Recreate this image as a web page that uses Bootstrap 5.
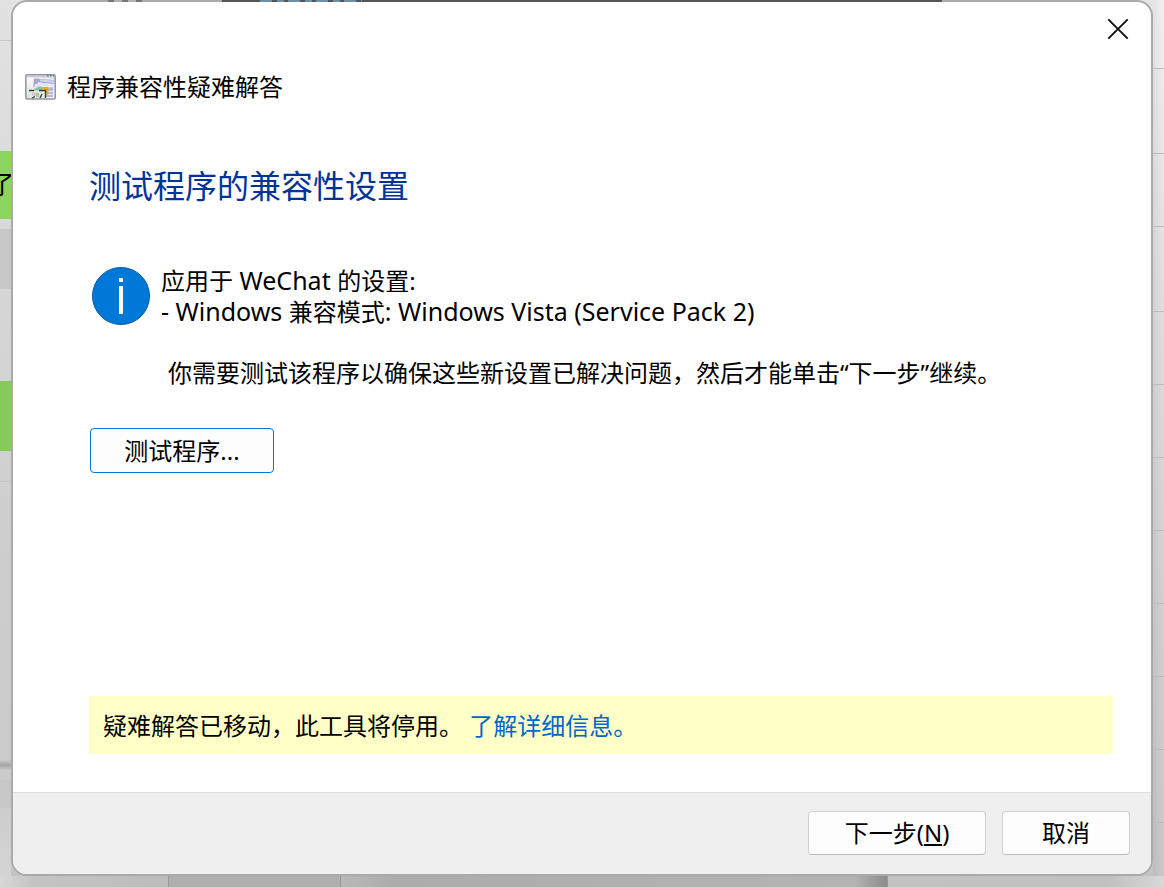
<!DOCTYPE html>
<html lang="zh-CN">
<head>
<meta charset="utf-8">
<meta name="viewport" content="width=device-width, initial-scale=1">
<title>程序兼容性疑难解答</title>
<link href="https://cdn.jsdelivr.net/npm/bootstrap@5.3.0/dist/css/bootstrap.min.css" rel="stylesheet">
<style>
  body {
    font-family: "Noto Sans", "Noto Sans CJK SC", sans-serif;
    font-size: 24px;
    line-height: 32px;
    color: #000;
    background: #c6c6c6;
  }
  .desktop { background: linear-gradient(#e4e4e4, #d4d4d4 45%, #cecece 96%, #bcbcbc); }
  .edge { width: 11px; flex: none; }
  .edge-left { background: linear-gradient(#e2e2e2, #d6d6d6 35%, #cdcdcd 65%, #cbcbcb 90%, #d4d4d4); }
  .edge-left div { flex: none; }
  .edge-right { background: linear-gradient(90deg, #0001, #0000), linear-gradient(#f2f2f2, #dedede 40%, #d2d2d2 70%, #cacaca); }
  .rule { border-bottom: 1px solid #c6c6c6; }
  .edge-right .rule { border-color: #bcbcbc; }
  .chat { background: #8bd45f; font-size: 26px; line-height: 66px; direction: rtl; white-space: nowrap; margin-right: -4px; }
  .chat-low { background: #85cb5b; }
  .tile { background: #c8c8c8; }
  .smudge { background: linear-gradient(#cacaca, #a4a4a4, #cacaca); }
  .strip { height: 11px; flex: none; }
  .strip div { border-right: 1px solid #989898; }
  .strip-a { width: 169px; background: linear-gradient(90deg, #d8d8d8, #c4c4c4 20%, #bcbcbc); }
  .strip-b { width: 172px; background: #afafaf; }
  .strip-c { width: 547px; background: linear-gradient(90deg, #b8b8b8, #acacac 10%, #b4b4b4 94%, #8c8c8c); }
  .strip .strip-d { background: linear-gradient(90deg, #c2c2c2, #c0c0c0 80%, #d8d8d8); border: 0; }
  .topline { height: 2px; top: 0; left: 108px; right: 222px; z-index: 2; }
  .topline .dots { width: 114px; background: repeating-linear-gradient(90deg, #777 0 6px, #b4b4b4 6px 14px) no-repeat 0 0 / 34px 2px; }
  .topline .dark { background: repeating-linear-gradient(90deg, #6a8fae 0 12px, #555 12px 17px, #6a8fae 17px 24px, #555 24px 28px) no-repeat 38px 0 / 102px 2px #555; }
  .dialog-win { position: relative; z-index: 1; border: 2px solid #aaa; border-radius: 16px; background: #fff; overflow: hidden; }
  .close-x { width: 32px; height: 32px; border: 0; background: none; margin: 11px 17px 0 0; padding: 0; }
  .title-row { padding: 24px 12px 0; gap: 11px; }
  .title-row h1, .main-head { font-size: inherit; line-height: 36px; font-weight: 400; margin: 0; }
  .main-head { font-size: 32px; line-height: 48px; color: #003399; margin-top: 57px; }
  .content { padding: 0 38px 38px 76px; }
  .info { margin-top: 55px; gap: 11px; padding-left: 3px; }
  .info p, .note { margin: 0; }
  .info p { line-height: 31px; }
  .latin { font-size: 25px; line-height: 1; }
  .note { padding-left: 79px; margin-top: 30px; }
  .btn-win {
    font-size: 24px; line-height: 32px; padding: 5px 12px; color: #000;
    background: #fdfdfd; border: 1px solid #d0d0d0; border-bottom-color: #bcbcbc; border-radius: 4px;
  }
  .btn-test { width: 184px; height: 45px; margin: 39px 0 0 1px; border-color: #0078d4; }
  .banner { background: #ffffc8; padding: 14px 14px 12px; margin-top: auto; }
  .banner a { color: #0066cc; text-decoration: none; }
  .foot { background: #efefef; border-top: 1px solid #dfdfdf; padding: 18px 21px 19px; gap: 16px; }
  .foot .btn-win { height: 44px; }
  .btn-next { width: 178px; }
  .btn-cancel { width: 128px; }
</style>
</head>
<body>
<div class="desktop min-vh-100 d-flex flex-column">
  <div class="d-flex flex-grow-1">
    <div class="edge edge-left d-flex flex-column" aria-hidden="true">
      <div class="rule" style="height:41px"></div>
      <div style="height:110px"></div>
      <div class="chat" style="height:68px">了</div>
      <div style="height:10px"></div>
      <div class="tile" style="height:60px"></div>
      <div style="height:92px"></div>
      <div class="chat-low" style="height:70px"></div>
      <div class="rule" style="height:31px"></div>
      <div style="height:278px"></div>
      <div class="smudge" style="height:10px"></div>
      <div class="rule" style="height:11px"></div>
      <div class="tile rule" style="height:27px"></div>
    </div>

    <main class="dialog-win flex-grow-1 d-flex flex-column">
      <div class="d-flex justify-content-end">
        <button type="button" class="close-x d-flex align-items-center justify-content-center" aria-label="关闭">
          <svg width="22" height="22" viewBox="0 0 22 22" fill="none" stroke="#111" stroke-width="1.9"><path d="M1.3 1.3 20.7 20.7M20.7 1.3 1.3 20.7"/></svg>
        </button>
      </div>
      <header class="title-row d-flex align-items-center">
        <svg width="31" height="26" viewBox="0 0 31 26" aria-hidden="true">
          <defs><linearGradient id="pane" x1="0" y1="1" x2="1" y2="0"><stop offset="0" stop-color="#d8dadd"/><stop offset=".5" stop-color="#fafafa"/><stop offset="1" stop-color="#dcdfe4"/></linearGradient></defs>
          <rect x=".8" y=".8" width="29.4" height="24.2" rx="1.5" fill="url(#pane)" stroke="#8f959f" stroke-width="1.5"/>
          <path d="M2 2.5h27" stroke="#c5c9d1" stroke-width="1.5"/>
          <path d="M22 1.7h1.500M25 1.700h1.500M28 1.700h1" stroke="#565b66"/>
          <path d="M9 4.500h5v2L11 14l-3-1z" fill="#a9a6d8"/>
          <path d="M13 5 28.500 6v4L14 8.500z" fill="#a6a4dc"/>
          <path d="M15 5.500 28 6.500v2.500L15 7.500z" fill="#cfd1f6"/>
          <path d="M10 10l12-1 2 5H9z" fill="#e2e6f5"/>
          <path d="M20 14l8-1v10h-8z" fill="#b7b5e3"/>
          <path d="M23 17.500h5M23 20.500h5" stroke="#ecebff"/>
          <path d="M16 13h7.500v7H20v-3z" fill="#eda91b"/>
          <path d="M9 15l6-3 3 3v2H9z" fill="#8ac398"/>
          <path d="M4 16.500h16.500V24H4z" fill="#e3e9e1"/>
          <path d="M4 16.500h5M14 16.500h6.500V24M7 24l3-1.500M15 24l2-4" stroke="#343a34" stroke-width="1.3" fill="none"/>
          <path d="M7 20h4" stroke="#e0bdd4" stroke-width="3"/><path d="M11 19h3v4h-3z" fill="#a3cf95"/>
        </svg>
        <h1>程序兼容性疑难解答</h1>
      </header>

      <section class="content flex-grow-1 d-flex flex-column">
        <h2 class="main-head">测试程序的兼容性设置</h2>
        <div class="info d-flex align-items-center">
          <svg class="flex-shrink-0" width="58" height="58" viewBox="0 0 58 58" aria-hidden="true">
            <circle cx="29" cy="29" r="28.500" fill="#0078d7" stroke="#0a5a9e"/>
            <path d="M27 11h4v4h-4zM27 19h4v28h-4z" fill="#fff"/>
          </svg>
          <p>应用于<span class="latin"> WeChat </span>的设置:<br><span class="latin">- Windows </span>兼容模式<span class="latin">: Windows Vista (Service Pack 2)</span></p>
        </div>
        <p class="note">你需要测试该程序以确保这些新设置已解决问题，然后才能单击“下一步”继续。</p>
        <div><button type="button" class="btn btn-win btn-test">测试程序...</button></div>
        <div class="banner">疑难解答已移动，此工具将停用。 <a href="#">了解详细信息。</a></div>
      </section>

      <footer class="foot d-flex justify-content-end">
        <button type="button" class="btn btn-win btn-next" accesskey="n">下一步(<u>N</u>)</button>
        <button type="button" class="btn btn-win btn-cancel">取消</button>
      </footer>
    </main>

    <div class="edge edge-right" aria-hidden="true">
      <div class="rule" style="height:69px"></div>
      <div class="rule" style="height:85px"></div>
      <div class="rule" style="height:73px"></div>
      <div class="rule" style="height:85px"></div>
      <div class="rule" style="height:73px"></div>
      <div class="rule" style="height:73px"></div>
      <div class="rule" style="height:73px"></div>
      <div class="rule" style="height:73px"></div>
      <div class="rule" style="height:73px"></div>
      <div class="rule" style="height:73px"></div>
      <div class="rule" style="height:73px"></div>
    </div>
  </div>
  <div class="strip d-flex" aria-hidden="true">
    <div class="strip-a"></div>
    <div class="strip-b"></div>
    <div class="strip-c"></div>
    <div class="strip-d flex-grow-1"></div>
  </div>
  <div class="topline position-absolute d-flex" aria-hidden="true"><div class="dots"></div><div class="dark flex-grow-1"></div></div>
</div>
<script src="https://cdn.jsdelivr.net/npm/bootstrap@5.3.0/dist/js/bootstrap.bundle.min.js"></script>
</body>
</html>
